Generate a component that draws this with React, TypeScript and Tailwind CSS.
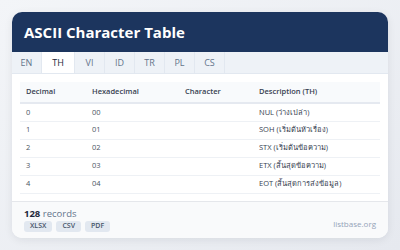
const tabs = ["EN", "TH", "VI", "ID", "TR", "PL", "CS"];

const rows = [
  { dec: "0", hex: "00", ch: "", desc: "NUL (ว่างเปล่า)" },
  { dec: "1", hex: "01", ch: "", desc: "SOH (เริ่มต้นหัวเรื่อง)" },
  { dec: "2", hex: "02", ch: "", desc: "STX (เริ่มต้นข้อความ)" },
  { dec: "3", hex: "03", ch: "", desc: "ETX (สิ้นสุดข้อความ)" },
  { dec: "4", hex: "04", ch: "", desc: "EOT (สิ้นสุดการส่งข้อมูล)" },
];

export default function App() {
  return (
    <div
      className="w-[400px] h-[250px] bg-gradient-to-br from-[#f3f5f8] to-[#e6e9ef] p-3"
      style={{ fontFamily: '"Open Sans", "Noto Sans", sans-serif' }}
    >
      <div className="h-[226px] bg-white rounded-[10px] shadow-[0_2px_8px_rgba(15,23,42,0.08)] overflow-hidden flex flex-col">
        <div className="h-10 bg-[#1c355e] flex items-center px-3">
          <h1 className="text-white text-[15px] font-bold">ASCII Character Table</h1>
        </div>
        <div className="h-[22px] bg-[#eef2f7] flex border-b border-[#e2e8f0]">
          {tabs.map((t) => (
            <div
              key={t}
              className={
                t === "TH"
                  ? "w-[33px] flex items-center justify-center text-[9px] text-[#1e293b] bg-white border-r border-[#e2e8f0]"
                  : "w-[30px] flex items-center justify-center text-[9px] text-[#64748b] border-r border-[#e2e8f0]"
              }
            >
              {t}
            </div>
          ))}
        </div>
        <div className="flex-1 px-2 pt-2">
          <table className="w-full text-[7.5px] border-collapse table-fixed">
            <thead>
              <tr className="bg-[#f8fafc] border-b-2 border-[#e5e9f0] h-[21px]">
                <th className="text-left font-semibold text-[#374151] px-[6px] w-[66px]">Decimal</th>
                <th className="text-left font-semibold text-[#374151] px-[6px] w-[93px]">Hexadecimal</th>
                <th className="text-left font-semibold text-[#374151] px-[6px] w-[74px]">Character</th>
                <th className="text-left font-semibold text-[#374151] px-[6px]">Description (TH)</th>
              </tr>
            </thead>
            <tbody>
              {rows.map((r) => (
                <tr key={r.dec} className="border-b border-[#eef1f5] h-[18px]">
                  <td className="px-[6px] text-[#4b5563]">{r.dec}</td>
                  <td className="px-[6px] text-[#4b5563]">{r.hex}</td>
                  <td className="px-[6px] text-[#374151]">{r.ch}</td>
                  <td className="px-[6px] text-[#374151] whitespace-nowrap">{r.desc}</td>
                </tr>
              ))}
            </tbody>
          </table>
        </div>
        <div className="h-[37px] bg-[#f9fafb] border-t border-[#e5e7eb] flex items-center justify-between px-3">
          <div className="flex flex-col gap-[2px]">
            <div className="text-[9.5px] leading-[11px] text-[#64748b]">
              <span className="font-bold text-[#1e293b]">128</span> records
            </div>
            <div className="flex gap-[4px]">
              {["XLSX", "CSV", "PDF"].map((b) => (
                <span
                  key={b}
                  className="h-[11px] px-[6px] rounded-[3px] bg-[#e2e8f0] text-[7px] font-semibold text-[#475569] flex items-center"
                >
                  {b}
                </span>
              ))}
            </div>
          </div>
          <span className="text-[8px] text-[#94a3b8] mt-2">listbase.org</span>
        </div>
      </div>
    </div>
  );
}
